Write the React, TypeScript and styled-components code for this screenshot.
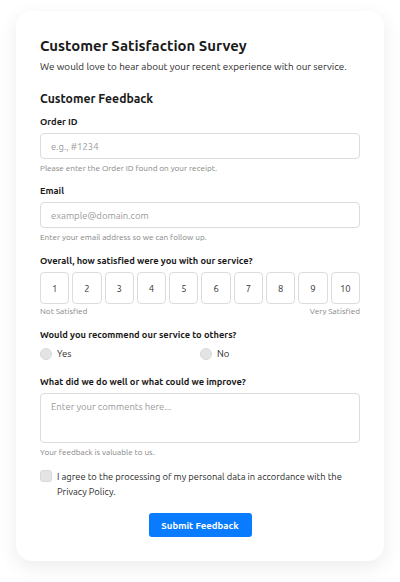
import React, { useState } from "react";
import styled, { createGlobalStyle } from "styled-components";

const GlobalStyle = createGlobalStyle`
  html, body { margin: 0; padding: 0; background: #ffffff; }
  body { font-family: Ubuntu, "Open Sans", "Noto Sans", sans-serif; color: #222; }
  * { box-sizing: border-box; }
`;

const Page = styled.div`
  padding: 11px 16px 20px;
`;

const Card = styled.form`
  background: #fff;
  border-radius: 16px;
  box-shadow: 0 6px 20px rgba(0, 0, 0, 0.08);
  padding: 24px;
  display: flex;
  flex-direction: column;
`;

const Title = styled.h1`
  margin: 0;
  font-size: 14.9px;
  line-height: 22px;
  font-weight: 700;
  color: #1a1a1a;
`;

const Subtitle = styled.p`
  margin: 1px 0 0;
  font-size: 9.9px;
  line-height: 18px;
  color: #2a2a2a;
`;

const SectionTitle = styled.h2`
  margin: 13px 0 5px;
  font-size: 12.2px;
  line-height: 20px;
  font-weight: 700;
  color: #1a1a1a;
`;

const Field = styled.div<{ $gap?: number }>`
  display: flex;
  flex-direction: column;
  margin-bottom: ${(p) => p.$gap ?? 8}px;
`;

const Label = styled.label`
  font-size: 9.3px;
  line-height: 16px;
  font-weight: 700;
  color: #1a1a1a;
  margin-bottom: 3px;
`;

const Input = styled.input`
  height: 26px;
  width: 100%;
  border: 1px solid #dcdcdc;
  border-radius: 4px;
  padding: 0 10px;
  font: inherit;
  font-size: 9.5px;
  color: #333;
  outline: none;
  &::placeholder { color: #9a9a9a; }
`;

const TextArea = styled.textarea`
  height: 50px;
  width: 100%;
  border: 1px solid #dcdcdc;
  border-radius: 4px;
  padding: 6px 10px;
  font: inherit;
  font-size: 9.5px;
  line-height: 14px;
  resize: none;
  display: block;
  outline: none;
  &::placeholder { color: #9a9a9a; }
`;

const Help = styled.div<{ $mt?: number }>`
  margin-top: ${(p) => p.$mt ?? 2}px;
  font-size: 8.2px;
  line-height: 14px;
  color: #858585;
`;

const Scale = styled.div`
  display: grid;
  grid-template-columns: repeat(10, 1fr);
  gap: 3px;
`;

const ScaleBox = styled.button`
  height: 32px;
  border: 1px solid #dcdcdc;
  border-radius: 4px;
  background: #fff;
  font: inherit;
  font-size: 9.5px;
  color: #333;
  padding: 0;
`;

const ScaleLabels = styled.div`
  display: flex;
  justify-content: space-between;
  font-size: 8.2px;
  line-height: 14px;
  color: #858585;
`;

const RadioRow = styled.div`
  display: grid;
  grid-template-columns: 1fr 1fr;
`;

const RadioOption = styled.label`
  display: flex;
  align-items: center;
  gap: 5px;
  font-size: 9.5px;
  line-height: 16px;
  color: #2a2a2a;
`;

const RadioDot = styled.span`
  width: 12px;
  height: 12px;
  border-radius: 50%;
  background: #e4e4e4;
  border: 1px solid #d8d8d8;
  flex: none;
`;

const CheckRow = styled.label`
  display: flex;
  align-items: flex-start;
  gap: 5px;
`;

const CheckBox = styled.span`
  width: 12px;
  height: 12px;
  margin-top: 1px;
  border-radius: 3px;
  background: #e4e4e4;
  border: 1px solid #d8d8d8;
  flex: none;
`;

const CheckText = styled.span`
  font-size: 9.35px;
  line-height: 15px;
  color: #2a2a2a;
`;

const Actions = styled.div`
  display: flex;
  justify-content: center;
  margin-top: 14px;
`;

const SubmitButton = styled.button`
  height: 24px;
  width: 103px;
  padding: 0;
  background: #087bff;
  color: #fff;
  border: none;
  border-radius: 3px;
  font: inherit;
  font-size: 9.6px;
  font-weight: 700;
`;

export default function App() {
  const [rating] = useState<number | null>(null);
  return (
    <>
      <GlobalStyle />
      <Page>
        <Card onSubmit={(e) => e.preventDefault()}>
          <Title>Customer Satisfaction Survey</Title>
          <Subtitle>We would love to hear about your recent experience with our service.</Subtitle>
          <SectionTitle>Customer Feedback</SectionTitle>

          <Field>
            <Label>Order ID</Label>
            <Input placeholder="e.g., #1234" />
            <Help>Please enter the Order ID found on your receipt.</Help>
          </Field>

          <Field $gap={9}>
            <Label>Email</Label>
            <Input placeholder="example@domain.com" />
            <Help>Enter your email address so we can follow up.</Help>
          </Field>

          <Field $gap={9}>
            <Label>Overall, how satisfied were you with our service?</Label>
            <Scale>
              {Array.from({ length: 10 }, (_, i) => (
                <ScaleBox type="button" key={i} aria-pressed={rating === i + 1}>
                  {i + 1}
                </ScaleBox>
              ))}
            </Scale>
            <ScaleLabels>
              <span>Not Satisfied</span>
              <span>Very Satisfied</span>
            </ScaleLabels>
          </Field>

          <Field $gap={12}>
            <Label>Would you recommend our service to others?</Label>
            <RadioRow>
              <RadioOption>
                <RadioDot />
                Yes
              </RadioOption>
              <RadioOption>
                <RadioDot />
                No
              </RadioOption>
            </RadioRow>
          </Field>

          <Field $gap={10}>
            <Label>What did we do well or what could we improve?</Label>
            <TextArea placeholder="Enter your comments here..." />
            <Help $mt={2}>Your feedback is valuable to us.</Help>
          </Field>

          <CheckRow>
            <CheckBox />
            <CheckText>
              I agree to the processing of my personal data in accordance with the Privacy Policy.
            </CheckText>
          </CheckRow>

          <Actions>
            <SubmitButton type="submit">Submit Feedback</SubmitButton>
          </Actions>
        </Card>
      </Page>
    </>
  );
}
